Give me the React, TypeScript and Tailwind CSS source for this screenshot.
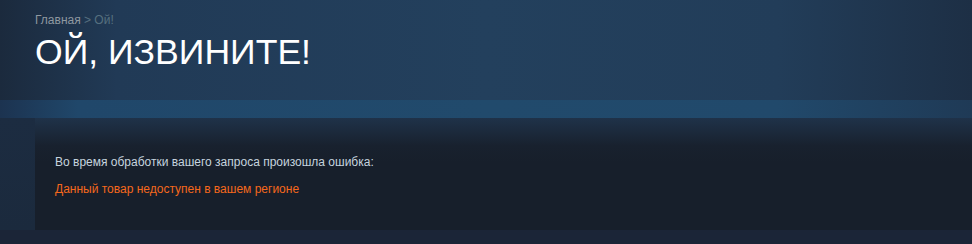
export default function App() {
  return (
    <div className="w-[972px] h-[244px] overflow-hidden bg-[#1b2537] font-['Liberation_Sans',Arial,sans-serif]">
      {/* header */}
      <div className="h-[100px] bg-[linear-gradient(90deg,#1b2a3d_0%,#213a56_12%,#23405d_50%,#223d59_80%,#1d2f45_100%)] pl-[35px] pt-[12px]">
        <div className="text-[12px] leading-[16px]">
          <span className="text-[#8f98a0]">Главная</span>
          <span className="text-[#56707f]"> &gt; Ой!</span>
        </div>
        <h1 className="text-white text-[35.6px] leading-[40px] mt-[4px] font-normal">ОЙ, ИЗВИНИТЕ!</h1>
      </div>
      {/* blue band */}
      <div className="h-[18px] bg-[linear-gradient(90deg,#1c3350_0%,#20476a_8%,#214a6c_50%,#21496b_80%,#1f3a56_100%)]" />
      {/* content */}
      <div className="flex bg-[#1b2a3d]">
        <div className="w-[35px] shrink-0 bg-[linear-gradient(180deg,#1c2c41_0%,#1b2a3d_100%)]" />
        <div className="flex-1 h-[112px] bg-[linear-gradient(180deg,#1f3249_0%,#18212e_25%,#171f2b_40%,#171f2b_100%)] pl-[20px] pt-[36px] text-[12px] leading-[16px]">
          <p className="text-[#c6d4df]">Во время обработки вашего запроса произошла ошибка:</p>
          <p className="text-[#f5681c] mt-[11px]">Данный товар недоступен в вашем регионе</p>
        </div>
      </div>
    </div>
  )
}
